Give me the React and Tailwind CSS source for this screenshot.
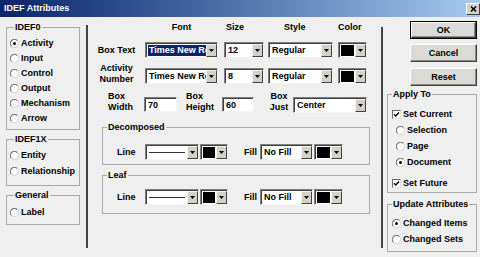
import React from 'react';

function Radio({ checked }) {
  return (
    <svg width="9" height="9" viewBox="0 0 12 12" className="shrink-0">
      <circle cx="6" cy="6" r="5.5" fill="#fff" />
      <path d="M2.1 9.9 A5.5 5.5 0 0 1 9.9 2.1" fill="none" stroke="#6a6a6a" strokeWidth="1.4" />
      <path d="M9.9 2.1 A5.5 5.5 0 0 1 2.1 9.9" fill="none" stroke="#d6d6d6" strokeWidth="1.4" />
      {checked && <circle cx="6" cy="6" r="2" fill="#000" />}
    </svg>
  );
}

function Check() {
  return (
    <div className="w-[9px] h-[9px] shrink-0 bg-white border border-t-[#6a6a6a] border-l-[#6a6a6a] border-b-[#e0e0e0] border-r-[#e0e0e0] flex items-center justify-center">
      <svg width="7" height="7" viewBox="0 0 7 7">
        <path d="M1 3.2 L2.8 5 L6 1.6" fill="none" stroke="#000" strokeWidth="1.4" />
      </svg>
    </div>
  );
}

function Option({ radio = true, checked, label, className = '' }) {
  return (
    <div className={`flex items-center gap-[2px] ${className}`}>
      {radio ? <Radio checked={checked} /> : <Check />}
      <span className="leading-none whitespace-nowrap">{label}</span>
    </div>
  );
}

function Group({ label, className = '', children }) {
  return (
    <fieldset className={`border border-[#a8a8a8] ${className}`}>
      <legend className="ml-[4px] px-[1px] leading-[11px]">{label}</legend>
      {children}
    </fieldset>
  );
}

function Arrow() {
  return (
    <div className="w-[11px] shrink-0 bg-[#d4d0c8] border border-t-[#f4f4f4] border-l-[#f4f4f4] border-b-[#404040] border-r-[#404040] flex items-center justify-center">
      <svg width="5" height="3" viewBox="0 0 5 3">
        <path d="M0 0H5L2.5 3Z" fill="#000" />
      </svg>
    </div>
  );
}

function Sunken({ className = '', children }) {
  return (
    <div className={`flex items-stretch bg-white border border-t-[#808080] border-l-[#808080] border-b-[#f4f4f4] border-r-[#f4f4f4] shadow-[inset_1px_1px_0_#404040] pt-[1px] pl-[1px] ${className}`}>
      {children}
    </div>
  );
}

function Combo({ value, selected, className = '' }) {
  return (
    <Sunken className={className}>
      <div className="flex-1 min-w-0 overflow-hidden flex items-center pl-[1px]">
        <span className={`whitespace-nowrap leading-[11px] px-[1px] ${selected ? 'bg-[#0a246a] text-white' : ''}`}>{value}</span>
      </div>
      <Arrow />
    </Sunken>
  );
}

function LineCombo({ className = '' }) {
  return (
    <Sunken className={className}>
      <div className="flex-1 flex items-center px-[2px]">
        <div className="h-[1px] w-full bg-[#333]" />
      </div>
      <Arrow />
    </Sunken>
  );
}

function ColorCombo({ className = '' }) {
  return (
    <Sunken className={className}>
      <div className="flex-1 flex items-center justify-center p-[1px]">
        <div className="w-full h-full bg-black" />
      </div>
      <Arrow />
    </Sunken>
  );
}

function Field({ value, className = '' }) {
  return (
    <Sunken className={className}>
      <span className="leading-none self-center pl-[2px]">{value}</span>
    </Sunken>
  );
}

function Button({ label, def, className = '' }) {
  return (
    <div className={`${def ? 'border border-black' : ''} ${className}`}>
      <div className="h-full bg-[#dcdad5] border border-t-white border-l-white border-b-[#404040] border-r-[#404040] shadow-[inset_-1px_-1px_0_#8a8a8a] flex items-center justify-center leading-none">
        {label}
      </div>
    </div>
  );
}

function AttrRow({ className = '' }) {
  return (
    <div className={`flex items-center h-[16px] pl-[14px] ${className}`}>
      <span className="w-[28px] leading-none">Line</span>
      <LineCombo className="w-[54px] h-full" />
      <ColorCombo className="w-[28px] h-full ml-[1px]" />
      <span className="ml-[16px] w-[16px] leading-none">Fill</span>
      <Combo value="No Fill" className="w-[53px] h-full" />
      <ColorCombo className="w-[29px] h-full ml-[1px]" />
    </div>
  );
}

export default function App() {
  return (
    <div className="w-[480px] h-[257px] overflow-hidden bg-[#efefef] text-black text-[9px] font-bold font-['Liberation_Sans',Arial,sans-serif] flex flex-col">
      <div className="h-[17px] shrink-0 bg-linear-to-r from-[#0a246a] to-[#a6caf0] flex items-center justify-between pl-[4px]">
        <span className="text-white leading-none">IDEF Attributes</span>
        <div className="w-[14px] h-[12px] bg-[#d4d0c8] border border-t-white border-l-white border-b-[#404040] border-r-[#404040] flex items-center justify-center">
          <svg width="7" height="6" viewBox="0 0 7 6">
            <path d="M1 0.5L6 5.5M6 0.5L1 5.5" stroke="#000" strokeWidth="1.5" />
          </svg>
        </div>
      </div>

      <div className="flex flex-1">
        <div className="w-[86px] shrink-0 pl-[6px] pt-[5px] flex flex-col">
          <Group label="IDEF0" className="w-[74px] h-[108px] pl-[3px]">
            <div className="pt-[3px] flex flex-col">
              <Option checked label="Activity" className="h-[15px]" />
              <Option label="Input" className="h-[15px]" />
              <Option label="Control" className="h-[15px]" />
              <Option label="Output" className="h-[15px]" />
              <Option label="Mechanism" className="h-[15px]" />
              <Option label="Arrow" className="h-[15px]" />
            </div>
          </Group>
          <Group label="IDEF1X" className="w-[74px] h-[52px] pl-[3px] mt-[4px]">
            <div className="pt-[3px] flex flex-col">
              <Option label="Entity" className="h-[15px]" />
              <Option label="Relationship" className="h-[16px]" />
            </div>
          </Group>
          <Group label="General" className="w-[74px] h-[35px] pl-[3px] mt-[4px]">
            <div className="pt-[4px]">
              <Option label="Label" className="h-[15px]" />
            </div>
          </Group>
        </div>

        <div className="w-[2px] shrink-0 bg-[#454545] mt-[8px] h-[223px]" />

        <div className="w-[293px] shrink-0 flex flex-col">
          <div className="mt-[5px] h-[11px] flex leading-[11px]">
            <div className="w-[57px]" />
            <div className="w-[73px] text-center">Font</div>
            <div className="w-[40px] ml-[6px] pl-[2px]">Size</div>
            <div className="w-[65px] ml-[4px] pl-[16px]">Style</div>
            <div className="w-[29px] ml-[5px]">Color</div>
          </div>

          <div className="mt-[9px] h-[16px] flex">
            <div className="w-[57px] text-center leading-none self-center">Box Text</div>
            <Combo selected value="Times New Roman" className="w-[73px]" />
            <Combo value="12" className="w-[40px] ml-[6px]" />
            <Combo value="Regular" className="w-[65px] ml-[4px]" />
            <ColorCombo className="w-[29px] ml-[5px]" />
          </div>

          <div className="mt-[10px] h-[16px] flex items-start">
            <div className="w-[57px] text-center leading-[11px] -mt-[5px]">Activity<br />Number</div>
            <Combo value="Times New Roman" className="w-[73px] h-full" />
            <Combo value="8" className="w-[40px] ml-[6px] h-full" />
            <Combo value="Regular" className="w-[65px] ml-[4px] h-full" />
            <ColorCombo className="w-[29px] ml-[5px] h-full" />
          </div>

          <div className="mt-[13px] h-[16px] flex items-start">
            <div className="ml-[20px] w-[36px] leading-[11px] -mt-[6px]">Box<br />Width</div>
            <Field value="70" className="w-[33px] h-[15px]" />
            <div className="ml-[9px] w-[36px] leading-[11px] -mt-[6px]">Box<br />Height</div>
            <Field value="60" className="w-[32px] h-[15px]" />
            <div className="ml-[14px] w-[25px] leading-[11px] -mt-[6px] text-center pr-[3px]">Box<br />Just</div>
            <Combo value="Center" className="w-[74px] h-full" />
          </div>

          <Group label="Decomposed" className="ml-[14px] w-[268px] h-[43px] mt-[9px]">
            <AttrRow className="mt-[11px]" />
          </Group>

          <Group label="Leaf" className="ml-[14px] w-[268px] h-[44px] mt-[5px]">
            <AttrRow className="mt-[8px]" />
          </Group>
        </div>

        <div className="w-[2px] shrink-0 bg-[#454545] mt-[10px] h-[221px]" />

        <div className="flex-1 flex flex-col">
          <Button def label="OK" className="ml-[27px] w-[67px] h-[18px] mt-[4px]" />
          <Button label="Cancel" className="ml-[27px] w-[67px] h-[18px] mt-[5px]" />
          <Button label="Reset" className="ml-[27px] w-[67px] h-[18px] mt-[6px]" />

          <Group label="Apply To" className="ml-[4px] w-[90px] h-[104px] mt-[3px]">
            <div className="mt-[6px] flex flex-col">
              <Option radio={false} label="Set Current" className="h-[16px] pl-[4px]" />
              <Option label="Selection" className="h-[16px] pl-[8px]" />
              <Option label="Page" className="h-[16px] pl-[8px]" />
              <Option checked label="Document" className="h-[16px] pl-[8px]" />
              <Option radio={false} label="Set Future" className="h-[15px] pl-[4px] mt-[6px]" />
            </div>
          </Group>

          <Group label="Update Attributes" className="ml-[4px] w-[90px] h-[53px] mt-[6px]">
            <div className="mt-[5px] flex flex-col">
              <Option checked label="Changed Items" className="h-[16px] pl-[4px]" />
              <Option label="Changed Sets" className="h-[16px] pl-[4px]" />
            </div>
          </Group>
        </div>
      </div>
    </div>
  );
}
